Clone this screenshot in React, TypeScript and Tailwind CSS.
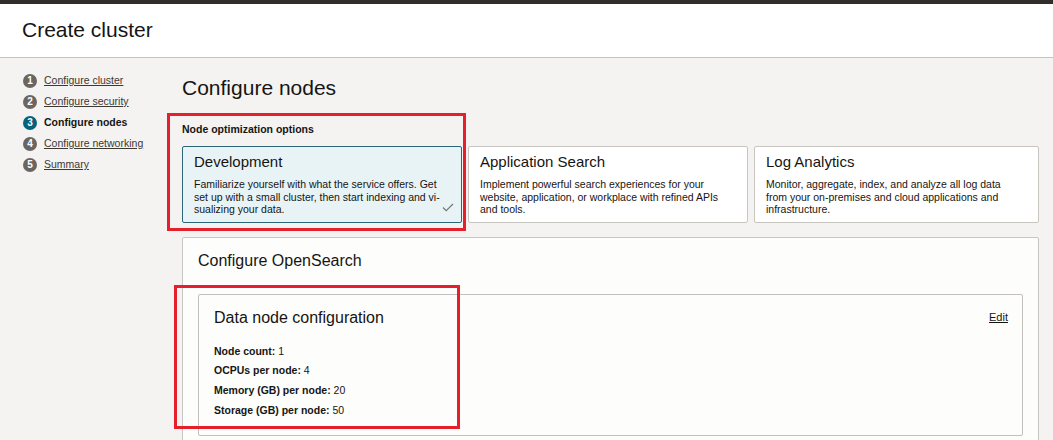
import React from "react";

const steps = [
  { n: 1, label: "Configure cluster", current: false },
  { n: 2, label: "Configure security", current: false },
  { n: 3, label: "Configure nodes", current: true },
  { n: 4, label: "Configure networking", current: false },
  { n: 5, label: "Summary", current: false },
];

const cards = [
  {
    title: "Development",
    lines: [
      "Familiarize yourself with what the service offers. Get",
      "set up with a small cluster, then start indexing and vi-",
      "sualizing your data.",
    ],
    selected: true,
  },
  {
    title: "Application Search",
    lines: [
      "Implement powerful search experiences for your",
      "website, application, or workplace with refined APIs",
      "and tools.",
    ],
    selected: false,
  },
  {
    title: "Log Analytics",
    lines: [
      "Monitor, aggregate, index, and analyze all log data",
      "from your on-premises and cloud applications and",
      "infrastructure.",
    ],
    selected: false,
  },
];

const items = [
  { label: "Node count:", value: "1" },
  { label: "OCPUs per node:", value: "4" },
  { label: "Memory (GB) per node:", value: "20" },
  { label: "Storage (GB) per node:", value: "50" },
];

export default function App() {
  return (
    <div
      className="relative w-full h-[440px] overflow-hidden bg-[#f4f3f1] text-[#161513]"
      style={{ fontFamily: '"Liberation Sans", Arial, sans-serif' }}
    >
      <div className="h-[4px] bg-[#312d2a]" />
      <div className="h-[54px] bg-white border-b border-[#c6c3be] flex items-center pl-[22px]">
        <h1 className="text-[21px] leading-[24px] font-normal -mt-[1px]">Create cluster</h1>
      </div>

      <div className="flex">
        <nav className="w-[182px] shrink-0 pl-[23px] pt-[12px]">
          {steps.map((s) => (
            <div key={s.n} className="h-[21px] flex items-center gap-[7px]">
              <span
                className={`w-[14px] h-[14px] rounded-full flex items-center justify-center text-white text-[10px] font-bold leading-none ${
                  s.current ? "bg-[#05627d]" : "bg-[#6b6561]"
                }`}
              >
                {s.n}
              </span>
              {s.current ? (
                <span className="text-[10.5px] leading-[13px] font-bold text-[#161513]">{s.label}</span>
              ) : (
                <a className="text-[10.5px] leading-[13px] text-[#3c3834] underline underline-offset-[1px]">
                  {s.label}
                </a>
              )}
            </div>
          ))}
        </nav>

        <main className="flex-1 pr-[14px] pt-[18px]">
          <h2 className="text-[21px] leading-[24px] font-normal">Configure nodes</h2>
          <div className="mt-[23px] text-[10.5px] leading-[13px] font-bold">Node optimization options</div>
          <div className="mt-[10px] grid grid-cols-[280px_280px_1fr] gap-[6px]">
            {cards.map((c) => (
              <div
                key={c.title}
                className={`relative h-[77px] rounded-[2px] border px-[11px] pt-[6px] ${
                  c.selected ? "bg-[#e8f3f6] border-[#2d6678]" : "bg-white border-[#c9c6c1]"
                }`}
              >
                <div className="text-[15px] leading-[18px]">{c.title}</div>
                <div className="mt-[7px] text-[10.5px] leading-[12.5px]">
                  {c.lines.map((l) => (
                    <div key={l} className="whitespace-nowrap">{l}</div>
                  ))}
                </div>
                {c.selected && (
                  <svg
                    className="absolute right-[7px] bottom-[10px]"
                    width="12"
                    height="9"
                    viewBox="0 0 12 9"
                    fill="none"
                  >
                    <path d="M1 4.5 L4.2 7.6 L11 1" stroke="#7a7672" strokeWidth="1.2" />
                  </svg>
                )}
              </div>
            ))}
          </div>

          <section className="mt-[14px] bg-[#fdfdfc] border border-[#c9c6c1] rounded-[2px] px-[15px] pt-[13px] pb-[30px]">
            <h3 className="text-[16px] leading-[19px] font-normal">Configure OpenSearch</h3>
            <div className="mt-[24px] border border-[#c3c0bb] rounded-[2px] bg-[#fdfdfc] pl-[15px] pr-[14px] pt-[13px] pb-[18px]">
              <div className="flex items-start justify-between">
                <h4 className="text-[16px] leading-[19px] font-normal">Data node configuration</h4>
                <a className="mt-[3px] text-[11px] leading-[13px] text-[#161513] underline">Edit</a>
              </div>
              <div className="mt-[17.5px] flex flex-col gap-[6.7px]">
                {items.map((it) => (
                  <div key={it.label} className="text-[10.5px] leading-[13px]">
                    <span className="font-bold">{it.label}</span> {it.value}
                  </div>
                ))}
              </div>
            </div>
          </section>
        </main>
      </div>

      <div className="absolute left-[167px] top-[113px] w-[299px] h-[118px] border-[3px] border-[#e5202a] pointer-events-none" />
      <div className="absolute left-[174px] top-[285px] w-[286px] h-[144px] border-[3px] border-[#e5202a] pointer-events-none" />
    </div>
  );
}
